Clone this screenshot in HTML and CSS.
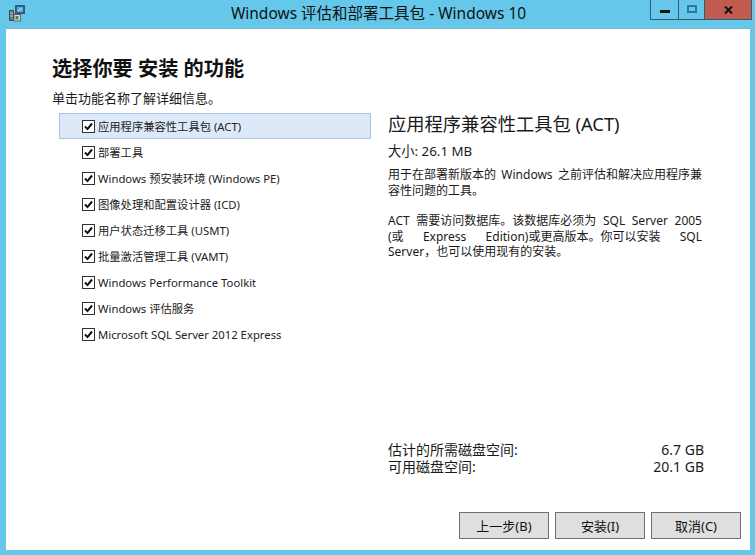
FILE: index.html
```
<!DOCTYPE html>
<html lang="zh-CN">
<head>
<meta charset="utf-8">
<title>Windows 评估和部署工具包 - Windows 10</title>
<link rel="stylesheet" href="styles.css">
</head>
<body>
<div class="window">
  <header class="titlebar">
    <svg class="app-icon" width="16" height="17" viewBox="0 0 16 17">
      <rect x="6.500" y="0.500" width="9" height="8" fill="#2f5f8a" stroke="#46545e"/>
      <path d="M8 2h6v5H8z" fill="#49b4ea"/>
      <path d="M9 6l4-3" stroke="#bfe6f7" fill="none"/>
      <path d="M0.500 5.500h4v10h-4z" fill="#6f7a80" stroke="#3e4a4f"/>
      <path d="M1.500 8h2M1.500 11h2" stroke="#d5dadc" fill="none"/>
      <path d="M5 9.500h6.500v6.500H5z" fill="#d9dfe1" stroke="#56666a"/>
      <path d="M6.500 11h3v3.500h-3z" fill="#3f8a4c"/>
      <path d="M8.500 8.500l3 1.500" stroke="#33424a" fill="none"/>
    </svg>
    <div class="title">Windows 评估和部署工具包 - Windows 10</div>
    <div class="controls">
      <div class="ctl ctl-min"><span class="min-glyph"></span></div>
      <div class="ctl ctl-max"><span class="max-glyph"></span></div>
      <div class="ctl ctl-close"><svg width="9" height="8" viewBox="0 0 9 8"><path d="M1 0.500l7 7M8 0.500l-7 7" stroke="#111" stroke-width="2" fill="none"/></svg></div>
    </div>
  </header>
  <main class="client">
    <h1 class="heading">选择你要 安装 的功能</h1>
    <p class="hint">单击功能名称了解详细信息。</p>
    <div class="panes">
      <ul class="features">
        <li class="feature selected"><span class="check"><svg width="11" height="11" viewBox="0 0 11 11"><path d="M2 5.500l2.500 2.600L9 2.500" stroke="#111" stroke-width="2" fill="none"/></svg></span>应用程序兼容性工具包 (ACT)</li>
        <li class="feature"><span class="check"><svg width="11" height="11" viewBox="0 0 11 11"><path d="M2 5.500l2.500 2.600L9 2.500" stroke="#111" stroke-width="2" fill="none"/></svg></span>部署工具</li>
        <li class="feature"><span class="check"><svg width="11" height="11" viewBox="0 0 11 11"><path d="M2 5.500l2.500 2.600L9 2.500" stroke="#111" stroke-width="2" fill="none"/></svg></span>Windows 预安装环境 (Windows PE)</li>
        <li class="feature"><span class="check"><svg width="11" height="11" viewBox="0 0 11 11"><path d="M2 5.500l2.500 2.600L9 2.500" stroke="#111" stroke-width="2" fill="none"/></svg></span>图像处理和配置设计器 (ICD)</li>
        <li class="feature"><span class="check"><svg width="11" height="11" viewBox="0 0 11 11"><path d="M2 5.500l2.500 2.600L9 2.500" stroke="#111" stroke-width="2" fill="none"/></svg></span>用户状态迁移工具 (USMT)</li>
        <li class="feature"><span class="check"><svg width="11" height="11" viewBox="0 0 11 11"><path d="M2 5.500l2.500 2.600L9 2.500" stroke="#111" stroke-width="2" fill="none"/></svg></span>批量激活管理工具 (VAMT)</li>
        <li class="feature"><span class="check"><svg width="11" height="11" viewBox="0 0 11 11"><path d="M2 5.500l2.500 2.600L9 2.500" stroke="#111" stroke-width="2" fill="none"/></svg></span>Windows Performance Toolkit</li>
        <li class="feature"><span class="check"><svg width="11" height="11" viewBox="0 0 11 11"><path d="M2 5.500l2.500 2.600L9 2.500" stroke="#111" stroke-width="2" fill="none"/></svg></span>Windows 评估服务</li>
        <li class="feature"><span class="check"><svg width="11" height="11" viewBox="0 0 11 11"><path d="M2 5.500l2.500 2.600L9 2.500" stroke="#111" stroke-width="2" fill="none"/></svg></span>Microsoft SQL Server 2012 Express</li>
      </ul>
      <section class="details">
        <h2 class="detail-title">应用程序兼容性工具包 (ACT)</h2>
        <p class="size">大小: 26.1 MB</p>
        <p class="para">
          <span class="line fill"><span>用于在部署新版本的</span><span>Windows</span><span>之前评估和解决应用程序兼</span></span>
          <span class="line">容性问题的工具。</span>
        </p>
        <p class="para para-gap">
          <span class="line fill"><span>ACT</span><span>需要访问数据库。该数据库必须为</span><span>SQL</span><span>Server</span><span>2005</span></span>
          <span class="line fill"><span>(或</span><span>Express</span><span>Edition)或更高版本。你可以安装</span><span>SQL</span></span>
          <span class="line">Server，也可以使用现有的安装。</span>
        </p>
        <div class="disk">
          <div class="disk-row"><span>估计的所需磁盘空间:</span><span>6.7 GB</span></div>
          <div class="disk-row"><span>可用磁盘空间:</span><span>20.1 GB</span></div>
        </div>
      </section>
    </div>
    <footer class="buttons">
      <button class="btn">上一步(B)</button>
      <button class="btn">安装(I)</button>
      <button class="btn">取消(C)</button>
    </footer>
  </main>
</div>
</body>
</html>
```
FILE: styles.css
```
* { box-sizing: border-box; }
html, body { margin: 0; padding: 0; }
body {
  width: 755px;
  height: 555px;
  overflow: hidden;
  background: #65c8ea;
  font-family: "Noto Sans", "Noto Sans CJK SC", sans-serif;
  color: #1a1a1a;
}
.window {
  height: 555px;
  display: flex;
  flex-direction: column;
  padding: 0 5px 5px 6px;
}
.titlebar {
  height: 29px;
  flex: none;
  display: flex;
  align-items: flex-start;
  margin-left: -6px;
  margin-right: -5px;
  padding-left: 9px;
}
.app-icon { margin-top: 5px; flex: none; }
.title {
  flex: 1;
  text-align: center;
  font-size: 15.5px;
  line-height: 26px;
  padding-left: 82px;
  color: #111;
  white-space: nowrap;
}
.controls { display: flex; flex: none; margin-right: 3px; height: 20px; }
.ctl {
  height: 20px;
  border: 1px solid #2f5f72;
  border-top: 0;
  display: flex;
  align-items: center;
  justify-content: center;
}
.ctl + .ctl { border-left: 0; }
.ctl-min { width: 29px; }
.ctl-max { width: 26px; }
.ctl-close { width: 47px; background: #c15a4f; }
.min-glyph { width: 10px; height: 3px; background: #111; margin-top: 3px; }
.max-glyph { width: 10px; height: 8px; border: 2px solid #2d7b99; margin-top: -1px; }
.client {
  flex: 1;
  background: #fff;
  box-shadow: 0 -1px 0 #84b6cb;
  min-height: 0;
  display: flex;
  flex-direction: column;
  padding: 0 0 0 46px;
}
.heading {
  margin: 25px 0 0;
  font-size: 20.2px;
  line-height: 28px;
  font-weight: 700;
  color: #111;
}
.hint {
  margin: 8px 0 0;
  font-size: 13px;
  line-height: 16px;
}
.panes { display: flex; flex: 1; min-height: 0; margin-top: 7px; }
.features {
  list-style: none;
  margin: 0 0 0 7px;
  padding: 0;
  width: 312px;
  flex: none;
}
.feature {
  height: 26px;
  padding-left: 23px;
  display: flex;
  align-items: center;
  font-size: 11.3px;
  white-space: nowrap;
  color: #222;
}
.feature.selected { background: #dde9f8; outline: 1px solid #a9c4e0; outline-offset: -1px; }
.check {
  width: 13px;
  height: 13px;
  border: 1px solid #333;
  background: #fff;
  margin-right: 3px;
  display: flex;
  align-items: center;
  justify-content: center;
  flex: none;
}
.details {
  margin-left: 17px;
  padding-top: 1px;
  width: 314px;
  flex: none;
  display: flex;
  flex-direction: column;
}
.detail-title {
  margin: 0;
  font-size: 18.3px;
  line-height: 20px;
  font-weight: 400;
}
.size { margin: 9px 0 0; font-size: 13.3px; line-height: 16px; }
.para { margin: 8px 0 0; font-size: 12px; line-height: 15.5px; }
.para-gap { margin-top: 15px; }
.line { display: block; white-space: nowrap; }
.line.fill { display: flex; justify-content: space-between; }
.disk { margin: auto -2px 37px 0; font-size: 14px; line-height: 17px; }
.disk-row { display: flex; justify-content: space-between; }
.buttons {
  flex: none;
  display: flex;
  justify-content: flex-end;
  gap: 6px;
  padding: 0 9px 11px 0;
}
.btn {
  width: 90px;
  height: 27px;
  background: #dfdfdf;
  border: 1px solid #707070;
  font: inherit;
  font-size: 13px;
  color: #111;
  padding: 0;
}
```
